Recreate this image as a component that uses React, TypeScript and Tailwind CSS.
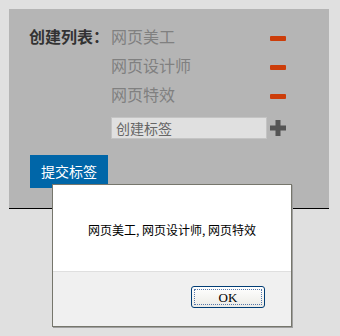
const items = ["网页美工", "网页设计师", "网页特效"]

function Minus() {
  return <span className="block h-[5px] w-4 rounded-[1px] bg-[#cc3d0a]" />
}

function Plus() {
  return (
    <svg width="16" height="16" viewBox="0 0 16 16" className="block">
      <rect x="5.5" y="0" width="5" height="16" fill="#555555" />
      <rect x="0" y="5.5" width="16" height="5" fill="#555555" />
    </svg>
  )
}

export default function App() {
  return (
    <div
      className="relative h-[336px] w-[340px] overflow-hidden bg-[#e0e0e0] p-[9px]"
      style={{ fontFamily: '"Noto Sans CJK SC", "Noto Sans", sans-serif' }}
    >
      <div className="h-[200px] w-[320px] border-b border-black bg-[#b5b5b5] pl-5 pt-[13px]">
        <div className="flex">
          <div className="w-[82px] text-[16px] leading-[29px] font-bold text-[#333333]">
            创建列表：
          </div>
          <div className="flex flex-col">
            {items.map((item) => (
              <div key={item} className="flex h-[29px] w-[175px] items-center justify-between">
                <span className="text-[16px] leading-[29px] text-[#808080]">{item}</span>
                <span className="mt-[3px]">
                  <Minus />
                </span>
              </div>
            ))}
            <div className="mt-2 flex w-[175px] items-center justify-between">
              <input
                className="h-[22px] w-[156px] border border-[#c4c4c4] bg-[#e0e0e0] px-1 text-[14px] text-[#555555] outline-none placeholder:text-[#666666]"
                placeholder="创建标签"
              />
              <Plus />
            </div>
          </div>
        </div>
        <button className="mt-[16px] ml-px h-[33px] w-[78px] bg-[#0066a8] text-[14px] text-white">
          提交标签
        </button>
      </div>

      <div className="absolute top-[184px] left-[52px] flex h-[143px] w-[240px] flex-col border border-[#76766c] bg-[#f0f0f0] shadow-[1px_1px_0_#a0a0a0]">
        <div className="flex h-[87px] items-center justify-center border-b border-[#dfdfdf] bg-white pt-1 text-[12px] text-black">
          网页美工, 网页设计师, 网页特效
        </div>
        <div className="flex flex-1 justify-end pt-[14px] pr-[26px]">
          <button
            className="h-[22px] w-[74px] rounded-[3px] border border-[#003c74] bg-gradient-to-b from-[#ffffff] to-[#ecebe6] text-[13px] leading-none text-black outline-1 outline-dotted outline-offset-[-4px] outline-[#5577aa]"
            style={{ fontFamily: '"Liberation Serif", serif' }}
          >
            OK
          </button>
        </div>
      </div>
    </div>
  )
}
